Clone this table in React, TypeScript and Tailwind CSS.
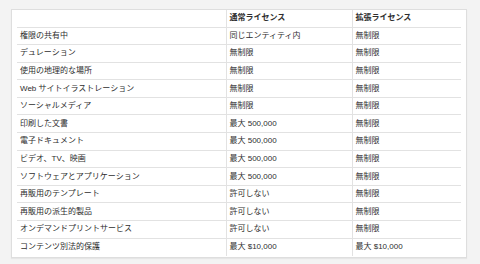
const rows: [string, string, string][] = [
  ['権限の共有中', '同じエンティティ内', '無制限'],
  ['デュレーション', '無制限', '無制限'],
  ['使用の地理的な場所', '無制限', '無制限'],
  ['Web サイトイラストレーション', '無制限', '無制限'],
  ['ソーシャルメディア', '無制限', '無制限'],
  ['印刷した文書', '最大 500,000', '無制限'],
  ['電子ドキュメント', '最大 500,000', '無制限'],
  ['ビデオ、TV、映画', '最大 500,000', '無制限'],
  ['ソフトウェアとアプリケーション', '最大 500,000', '無制限'],
  ['再販用のテンプレート', '許可しない', '無制限'],
  ['再販用の派生的製品', '許可しない', '無制限'],
  ['オンデマンドプリントサービス', '許可しない', '無制限'],
  ['コンテンツ別法的保護', '最大 $10,000', '最大 $10,000'],
];

export default function App() {
  return (
    <div
      className="min-h-screen bg-[#f3f3f3] pt-[9px] pl-[11px] text-[#2e2e2e] text-[8px] leading-none"
      style={{ fontFamily: '"Liberation Sans", "Noto Sans CJK JP", sans-serif' }}
    >
      <div className="w-[456px] bg-white border border-[#dedede] px-[5px] pb-px shadow-[0_1px_1px_rgba(0,0,0,0.05)]">
        <table className="w-[444px] border-collapse table-fixed">
          <colgroup>
            <col className="w-[209px]" />
            <col className="w-[126px]" />
            <col className="w-[109px]" />
          </colgroup>
          <thead>
            <tr className="h-[17px] border-b border-[#e2e2e2]">
              <th className="px-[3px] text-left font-bold"></th>
              <th className="px-[3px] text-left font-bold border-l border-[#e2e2e2]">通常ライセンス</th>
              <th className="px-[3px] text-left font-bold border-l border-[#e2e2e2]">拡張ライセンス</th>
            </tr>
          </thead>
          <tbody>
            {rows.map((r, i) => (
              <tr
                key={r[0]}
                className={i < rows.length - 1 ? 'h-[17.6px] border-b border-[#e2e2e2]' : 'h-[17.6px]'}
              >
                <td className="px-[3px] whitespace-nowrap">{r[0]}</td>
                <td className="px-[3px] whitespace-nowrap border-l border-[#e2e2e2]">{r[1]}</td>
                <td className="px-[3px] whitespace-nowrap border-l border-[#e2e2e2]">{r[2]}</td>
              </tr>
            ))}
          </tbody>
        </table>
      </div>
    </div>
  );
}
